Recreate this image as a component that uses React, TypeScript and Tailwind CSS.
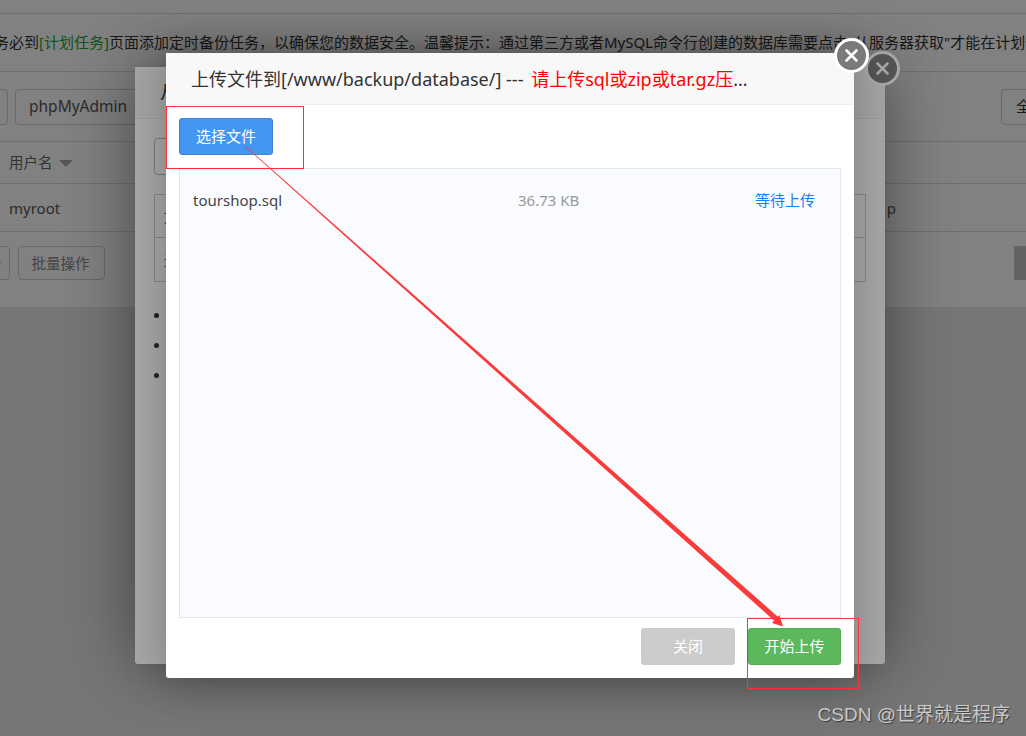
import { ReactNode } from "react";

const font = "font-['Noto_Sans','Noto_Sans_CJK_SC',sans-serif]";

const CloseIcon = ({ className }: { className: string }) => (
  <div className={`absolute flex h-[35px] w-[35px] items-center justify-center rounded-full border-[3px] ${className}`}>
    <svg width="17" height="17" viewBox="0 0 17 17" fill="none" stroke="#fff" strokeWidth="2.600" strokeLinecap="round">
      <path d="M3.500 3.500l10 10M13.500 3.500l-10 10" />
    </svg>
  </div>
);

const GhostButton = ({ children, className }: { children: ReactNode; className: string }) => (
  <div className={`flex items-center whitespace-nowrap rounded border border-[#cfcfcf] ${className}`}>{children}</div>
);

const Page = () => (
  <div className="flex h-full flex-col bg-[#e9e9e9] text-[#333]">
    <div className="h-[307px] bg-white">
      <div className="h-[14px] border-b border-[#ddd]" />
      <div className="flex h-[58px] items-center overflow-hidden whitespace-nowrap border-b border-[#ddd] text-[15px]">
        <span className="-ml-[6px]">
          务必到<span className="text-[#20a53a]">[计划任务]</span>页面添加定时备份任务，以确保您的数据安全。温馨提示：通过第三方或者MySQL命令行创建的数据库需要点击"从服务器获取"才能在计划任务中备份
        </span>
      </div>
      <div className="flex h-[70px] items-center justify-between border-b border-[#ddd]">
        <div className="flex items-center gap-[7px]">
          <GhostButton className="-ml-[20px] h-[36px] w-[28px]">
            <span />
          </GhostButton>
          <GhostButton className="h-[36px] w-[130px] pl-[13px] text-[15.500px] text-[#555]">phpMyAdmin</GhostButton>
        </div>
        <GhostButton className="-mr-[20px] h-[36px] w-[45px] pl-[14px] text-[15px]">全部</GhostButton>
      </div>
      <div className="flex h-[42px] items-center gap-[6px] border-b border-[#ddd] pl-[9px] text-[14.500px] text-[#666]">
        用户名
        <span className="mt-[1px] h-0 w-0 border-x-[7px] border-t-[7px] border-x-transparent border-t-[#aaa]" />
      </div>
      <div className="flex h-[48px] items-center justify-between border-b border-[#ddd] pl-[9px] pr-[130px] pt-[2px] text-[15px]">
        <span className="text-[#555]">myroot</span>
        <span className="text-[#555]">p</span>
      </div>
      <div className="flex h-[74px] items-start justify-between pt-[14px]">
        <div className="flex items-center gap-[8px]">
          <GhostButton className="-ml-[20px] h-[34px] w-[30px] justify-end pr-[8px] text-[10px] text-[#bbb]">▾</GhostButton>
          <GhostButton className="h-[34px] w-[87px] justify-center pr-[2px] pt-[1px] text-[14.500px] text-[#888]">批量操作</GhostButton>
        </div>
        <div className="h-[34px] w-[12px] bg-[#c5c5c5]" />
      </div>
    </div>
  </div>
);

const ImportDialog = () => (
  <div className="absolute left-[135px] top-[67px] flex h-[597px] w-[750px] flex-col rounded-[3px] bg-white text-[#333] shadow-[0_0_70px_rgba(0,0,0,0.45)]">
    <div className="flex h-[52px] shrink-0 items-center border-b border-[#eee] bg-[#fafafa] pl-[25px] text-[18px]">
      从文件导入数据库
    </div>
    <div className="flex flex-col px-[19px] pt-[19px]">
      <div className="h-[37px] w-[120px] rounded border border-[#bbb]" />
      <div className="mt-[19px] flex h-[88px] flex-col border border-[#ccc]">
        <div className="h-[43px] border-b border-[#ccc] pl-[9px] pt-[11px] text-[14px]">文件名称</div>
        <div className="flex-1 pl-[9px] pt-[11px] text-[14px]">无</div>
      </div>
      <ul className="mt-[19px] list-disc pl-[17px] text-[14px] text-[#333]">
        <li className="h-[30px] leading-[30px]">仅支持sql、zip、sql.gz、tar.gz</li>
        <li className="h-[30px] leading-[30px]">zip、tar.gz压缩包结构</li>
        <li className="h-[30px] leading-[30px]">若文件过大，您还可以使用SFTP工具</li>
      </ul>
    </div>
    <CloseIcon className="-right-[15px] -top-[16px] border-white bg-[#808080]" />
  </div>
);

const UploadDialog = () => (
  <div className="absolute left-[166px] top-[53px] flex h-[625px] w-[688px] flex-col rounded-[3px] bg-white shadow-[0_0_40px_rgba(0,0,0,0.25)]">
    <div className="flex h-[52px] shrink-0 items-center border-b border-[#eeeeee] bg-[#f8f8f8] pl-[25px] pr-[99px] pt-[1px] text-[18px] text-[#333]">
      <span className="truncate">
        上传文件到[/www/backup/database/] --- <span className="ml-[3px] text-[#ff0000]">请上传sql或zip或tar.gz压缩包</span>
      </span>
    </div>
    <div className="flex flex-1 flex-col px-[13px] pt-[13px]">
      <div className="flex h-[37px] w-[94px] items-center justify-center rounded-[3px] border border-[#3c83d4] bg-[#4596f0] text-[15px] text-white">
        选择文件
      </div>
      <div className="mt-[13px] h-[450px] w-[662px] border border-[#e4e6ee] bg-[#f9fbff]">
        <div className="flex items-center pl-[13px] pt-[21px] text-[15px] leading-5">
          <span className="w-[325px] text-[#444]">tourshop.sql</span>
          <span className="w-[237px] text-[#999]">36.73 KB</span>
          <span className="text-[#1a7bff]">等待上传</span>
        </div>
      </div>
      <div className="mt-[10px] flex justify-end gap-[13px] text-[15px] text-white">
        <div className="flex h-[37px] w-[94px] items-center justify-center rounded-[3px] bg-[#cccccc]">关闭</div>
        <div className="flex h-[37px] w-[93px] items-center justify-center rounded-[3px] border border-[#51ad51] bg-[#5cb85c]">开始上传</div>
      </div>
    </div>
  </div>
);

const Annotations = () => (
  <>
    <div className="absolute left-[166px] top-[106px] h-[63px] w-[138px] border border-[#ff3333]" />
    <div className="absolute left-[747px] top-[618px] h-[71px] w-[112px] border border-[#ff3333]" />
    <svg className="absolute left-0 top-0" width="1026" height="736" viewBox="0 0 1026 736" fill="#fb3a3a">
      <path d="M245 145.500L778 617L774.500 621L245 146.500Z" />
      <path d="M783 626.500L772 623L779.500 615Z" />
    </svg>
  </>
);

export default function App() {
  return (
    <div className={`relative h-[736px] w-[1026px] overflow-hidden ${font}`}>
      <Page />
      <div className="absolute inset-0 bg-black/[0.22]" />
      <ImportDialog />
      <div className="absolute inset-0 bg-black/35" />
      <UploadDialog />
      <CloseIcon className="left-[834px] top-[38px] border-white bg-[#7a7a7a]" />
      <Annotations />
      <div className="absolute right-[16px] top-[703px] whitespace-nowrap font-['Liberation_Sans','Noto_Sans_CJK_SC',sans-serif] text-[19px] leading-6 text-[#c9c9c9] [text-shadow:1px_1px_1px_#3c3c3c]">
        CSDN @世界就是程序
      </div>
    </div>
  );
}
